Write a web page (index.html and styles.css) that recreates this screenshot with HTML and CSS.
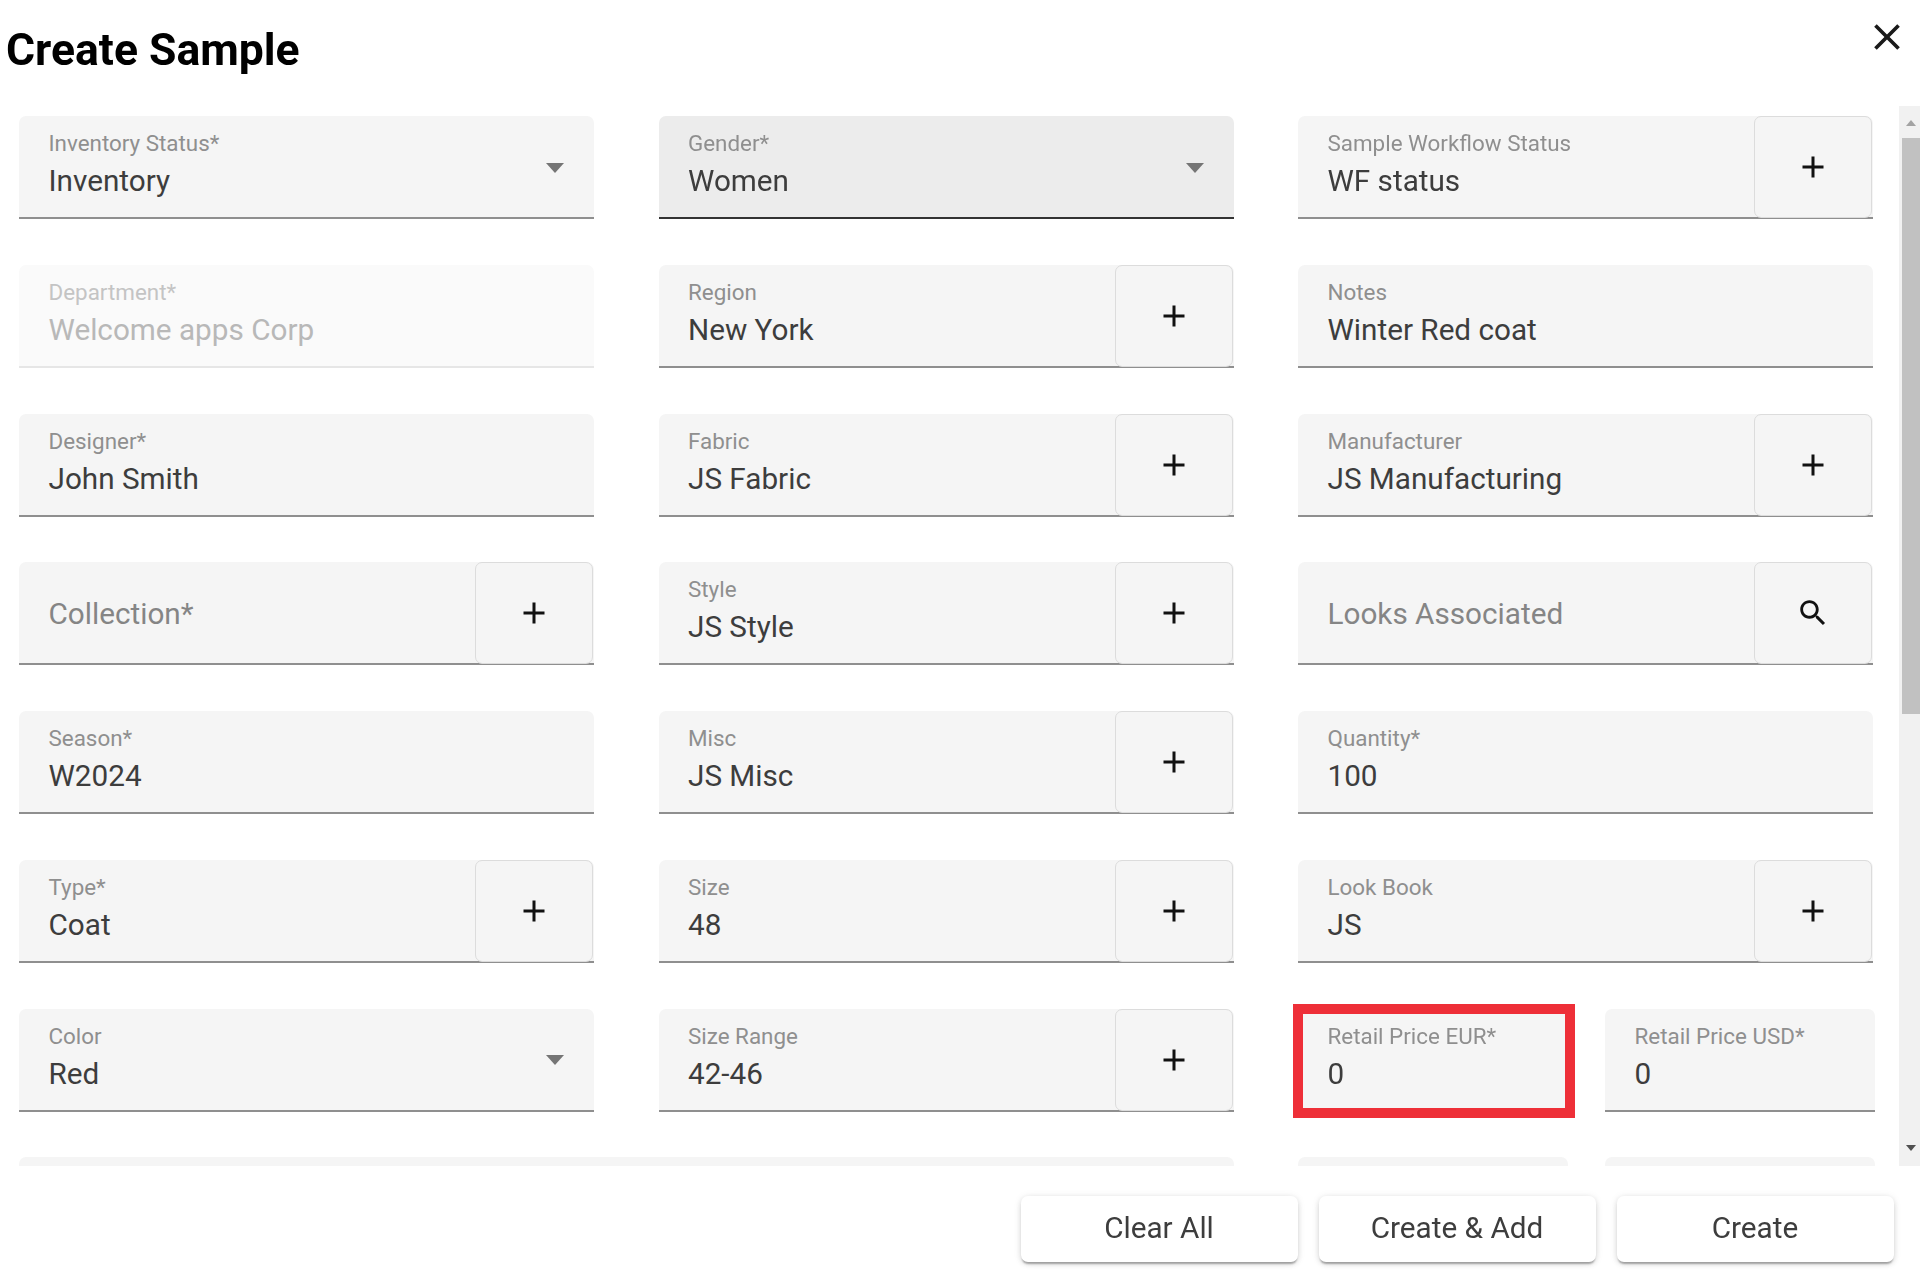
FILE: index.html
```html
<!DOCTYPE html>
<html lang="en">
<head>
<meta charset="utf-8">
<title>Create Sample</title>
<link rel="stylesheet" href="styles.css">
</head>
<body>
<svg class="defs" aria-hidden="true">
  <symbol id="i-plus" viewBox="0 0 24 24"><path d="M19 13h-6v6h-2v-6H5v-2h6V5h2v6h6v2z"/></symbol>
  <symbol id="i-search" viewBox="0 0 24 24"><path d="M15.5 14h-.79l-.28-.27C15.41 12.59 16 11.11 16 9.5 16 5.91 13.09 3 9.5 3S3 5.91 3 9.5 5.91 16 9.5 16c1.61 0 3.09-.59 4.23-1.57l.27.28v.79l5 4.99L20.49 19l-4.99-5zm-6 0C7.01 14 5 11.99 5 9.5S7.01 5 9.5 5 14 7.01 14 9.5 11.99 14 9.5 14z"/></symbol>
  <symbol id="i-close" viewBox="0 0 24 24"><path d="M19 6.41L17.59 5 12 10.59 6.41 5 5 6.41 10.59 12 5 17.59 6.41 19 12 13.41 17.59 19 19 17.59 13.41 12z"/></symbol>
</svg>
<div class="dialog">
  <header class="head">
    <h1 class="title">Create Sample</h1>
    <button class="close" type="button" aria-label="Close"><svg class="ico-close"><use href="#i-close"/></svg></button>
  </header>
  <div class="middle">
    <div class="scroller">
      <form class="grid">
        <div class="field"><div class="body"><span class="label">Inventory Status*</span><span class="value">Inventory</span></div><span class="caret"></span></div>
        <div class="field hover"><div class="body"><span class="label">Gender*</span><span class="value">Women</span></div><span class="caret"></span></div>
        <div class="field"><div class="body"><span class="label">Sample Workflow Status</span><span class="value">WF status</span></div><span class="addon"><svg class="ico-plus"><use href="#i-plus"/></svg></span></div>

        <div class="field disabled"><div class="body"><span class="label">Department*</span><span class="value">Welcome apps Corp</span></div></div>
        <div class="field"><div class="body"><span class="label">Region</span><span class="value">New York</span></div><span class="addon"><svg class="ico-plus"><use href="#i-plus"/></svg></span></div>
        <div class="field"><div class="body"><span class="label">Notes</span><span class="value">Winter Red coat</span></div></div>

        <div class="field"><div class="body"><span class="label">Designer*</span><span class="value">John Smith</span></div></div>
        <div class="field"><div class="body"><span class="label">Fabric</span><span class="value">JS Fabric</span></div><span class="addon"><svg class="ico-plus"><use href="#i-plus"/></svg></span></div>
        <div class="field"><div class="body"><span class="label">Manufacturer</span><span class="value">JS Manufacturing</span></div><span class="addon"><svg class="ico-plus"><use href="#i-plus"/></svg></span></div>

        <div class="field"><div class="body empty"><span class="placeholder">Collection*</span></div><span class="addon"><svg class="ico-plus"><use href="#i-plus"/></svg></span></div>
        <div class="field"><div class="body"><span class="label">Style</span><span class="value">JS Style</span></div><span class="addon"><svg class="ico-plus"><use href="#i-plus"/></svg></span></div>
        <div class="field"><div class="body empty"><span class="placeholder">Looks Associated</span></div><span class="addon"><svg class="ico-search"><use href="#i-search"/></svg></span></div>

        <div class="field"><div class="body"><span class="label">Season*</span><span class="value">W2024</span></div></div>
        <div class="field"><div class="body"><span class="label">Misc</span><span class="value">JS Misc</span></div><span class="addon"><svg class="ico-plus"><use href="#i-plus"/></svg></span></div>
        <div class="field"><div class="body"><span class="label">Quantity*</span><span class="value">100</span></div></div>

        <div class="field"><div class="body"><span class="label">Type*</span><span class="value">Coat</span></div><span class="addon"><svg class="ico-plus"><use href="#i-plus"/></svg></span></div>
        <div class="field"><div class="body"><span class="label">Size</span><span class="value">48</span></div><span class="addon"><svg class="ico-plus"><use href="#i-plus"/></svg></span></div>
        <div class="field"><div class="body"><span class="label">Look Book</span><span class="value">JS</span></div><span class="addon"><svg class="ico-plus"><use href="#i-plus"/></svg></span></div>

        <div class="field"><div class="body"><span class="label">Color</span><span class="value">Red</span></div><span class="caret"></span></div>
        <div class="field"><div class="body"><span class="label">Size Range</span><span class="value">42-46</span></div><span class="addon"><svg class="ico-plus"><use href="#i-plus"/></svg></span></div>
        <div class="pair">
          <div class="field flagged"><div class="body"><span class="label">Retail Price EUR*</span><span class="value">0</span></div><span class="flag"></span></div>
          <div class="field"><div class="body"><span class="label">Retail Price USD*</span><span class="value">0</span></div></div>
        </div>

        <div class="field wide"></div>
        <div class="pair">
          <div class="field"></div>
          <div class="field"></div>
        </div>
      </form>
    </div>
    <div class="scrollbar">
      <span class="arrow up"></span>
      <span class="thumb"></span>
      <span class="arrow down"></span>
    </div>
  </div>
  <footer class="actions">
    <button class="btn" type="button">Clear All</button>
    <button class="btn" type="button">Create &amp; Add</button>
    <button class="btn" type="button">Create</button>
  </footer>
</div>
</body>
</html>
```
FILE: styles.css
```css
* { box-sizing: border-box; }
html, body { margin: 0; height: 100%; background: #fff; }
body { font-family: Roboto, "Liberation Sans", sans-serif; overflow: hidden; }
.defs { display: none; }

.dialog { width: 1920px; height: 1280px; display: flex; flex-direction: column; filter: blur(0.6px); }

.head { height: 106px; flex: none; display: flex; justify-content: space-between; padding-left: 6px; }
.title { margin: 25px 0 0; font-size: 44.5px; line-height: 50px; font-weight: 700; color: #000; }
.close { width: 44px; height: 44px; margin: 15px 11px 0 0; padding: 0; border: 0; background: none; }
.ico-close { width: 44px; height: 44px; display: block; fill: #1a1a1a; }

.middle { height: 1060px; flex: none; display: flex; }
.scroller { flex: 1; overflow: hidden; padding: 10px 0 0 19px; }
.grid { display: grid; grid-template-columns: 575px 575px 577px; column-gap: 64.5px; grid-auto-rows: 103px; row-gap: 45.75px; }
.pair { display: grid; grid-template-columns: 270px 270px; column-gap: 37px; }

.field { position: relative; display: flex; height: 103px; background: #f5f5f5; border-radius: 7px 7px 0 0; border-bottom: 2px solid #8f8f8f; }
.grid > .field:nth-child(3n) { width: 575px; }
.wide { grid-column: span 2; }
.hover { background: #ececec; border-bottom-color: #333; }
.disabled { background: #fafafa; border-bottom-color: #e6e6e6; }

.body { flex: 1; min-width: 0; padding: 14px 0 0 29.5px; display: flex; flex-direction: column; }
.label { font-size: 22.4px; line-height: 27px; color: #8f8f8f; }
.value { font-size: 29.7px; line-height: 38px; margin-top: 5px; color: #3d3d3d; }
.disabled .label { color: #c4c4c4; }
.disabled .value { color: #b8b8b8; }
.empty { padding-top: 2px; justify-content: center; }
.placeholder { font-size: 29.7px; line-height: 38px; color: #858585; }

.caret { align-self: center; width: 0; height: 0; margin: 2px 30px 0 0; border-left: 9px solid transparent; border-right: 9px solid transparent; border-top: 10px solid #757575; }

.addon { flex: none; width: 118px; height: 102px; margin-right: 1px; display: flex; align-items: center; justify-content: center; border: 1px solid #dcdcdc; border-radius: 7px; }
.ico-plus { width: 36px; height: 36px; fill: #111; }
.ico-search { width: 34px; height: 34px; fill: #111; }

.flag { position: absolute; left: -5px; top: -4.5px; width: 282px; height: 114px; border: 10px solid #ee2f38; pointer-events: none; }
.flagged { border-bottom-color: transparent; }

.scrollbar { flex: none; width: 21px; background: #f1f1f1; padding-left: 3px; display: flex; flex-direction: column; align-items: stretch; }
.arrow { flex: none; width: 0; height: 0; align-self: center; border-left: 5px solid transparent; border-right: 5px solid transparent; }
.arrow.up { margin-top: 14px; margin-bottom: 12px; border-bottom: 6px solid #a3a3a3; }
.arrow.down { margin-top: auto; margin-bottom: 15px; border-top: 6px solid #505050; }
.thumb { flex: none; height: 576px; background: #c1c1c1; }

.actions { flex: 1; display: flex; justify-content: flex-end; gap: 21px; padding: 30px 26.5px 0 0; align-items: flex-start; }
.btn { width: 277px; height: 66px; padding: 0 0 4px; border: 0; border-radius: 7px; background: #fff; color: #3d3d3d; font-family: inherit; font-size: 29.7px; box-shadow: 0 3px 2px -1px rgba(0,0,0,.3), 0 2px 6px 0 rgba(0,0,0,.12), 0 1px 8px 0 rgba(0,0,0,.08); }
```
